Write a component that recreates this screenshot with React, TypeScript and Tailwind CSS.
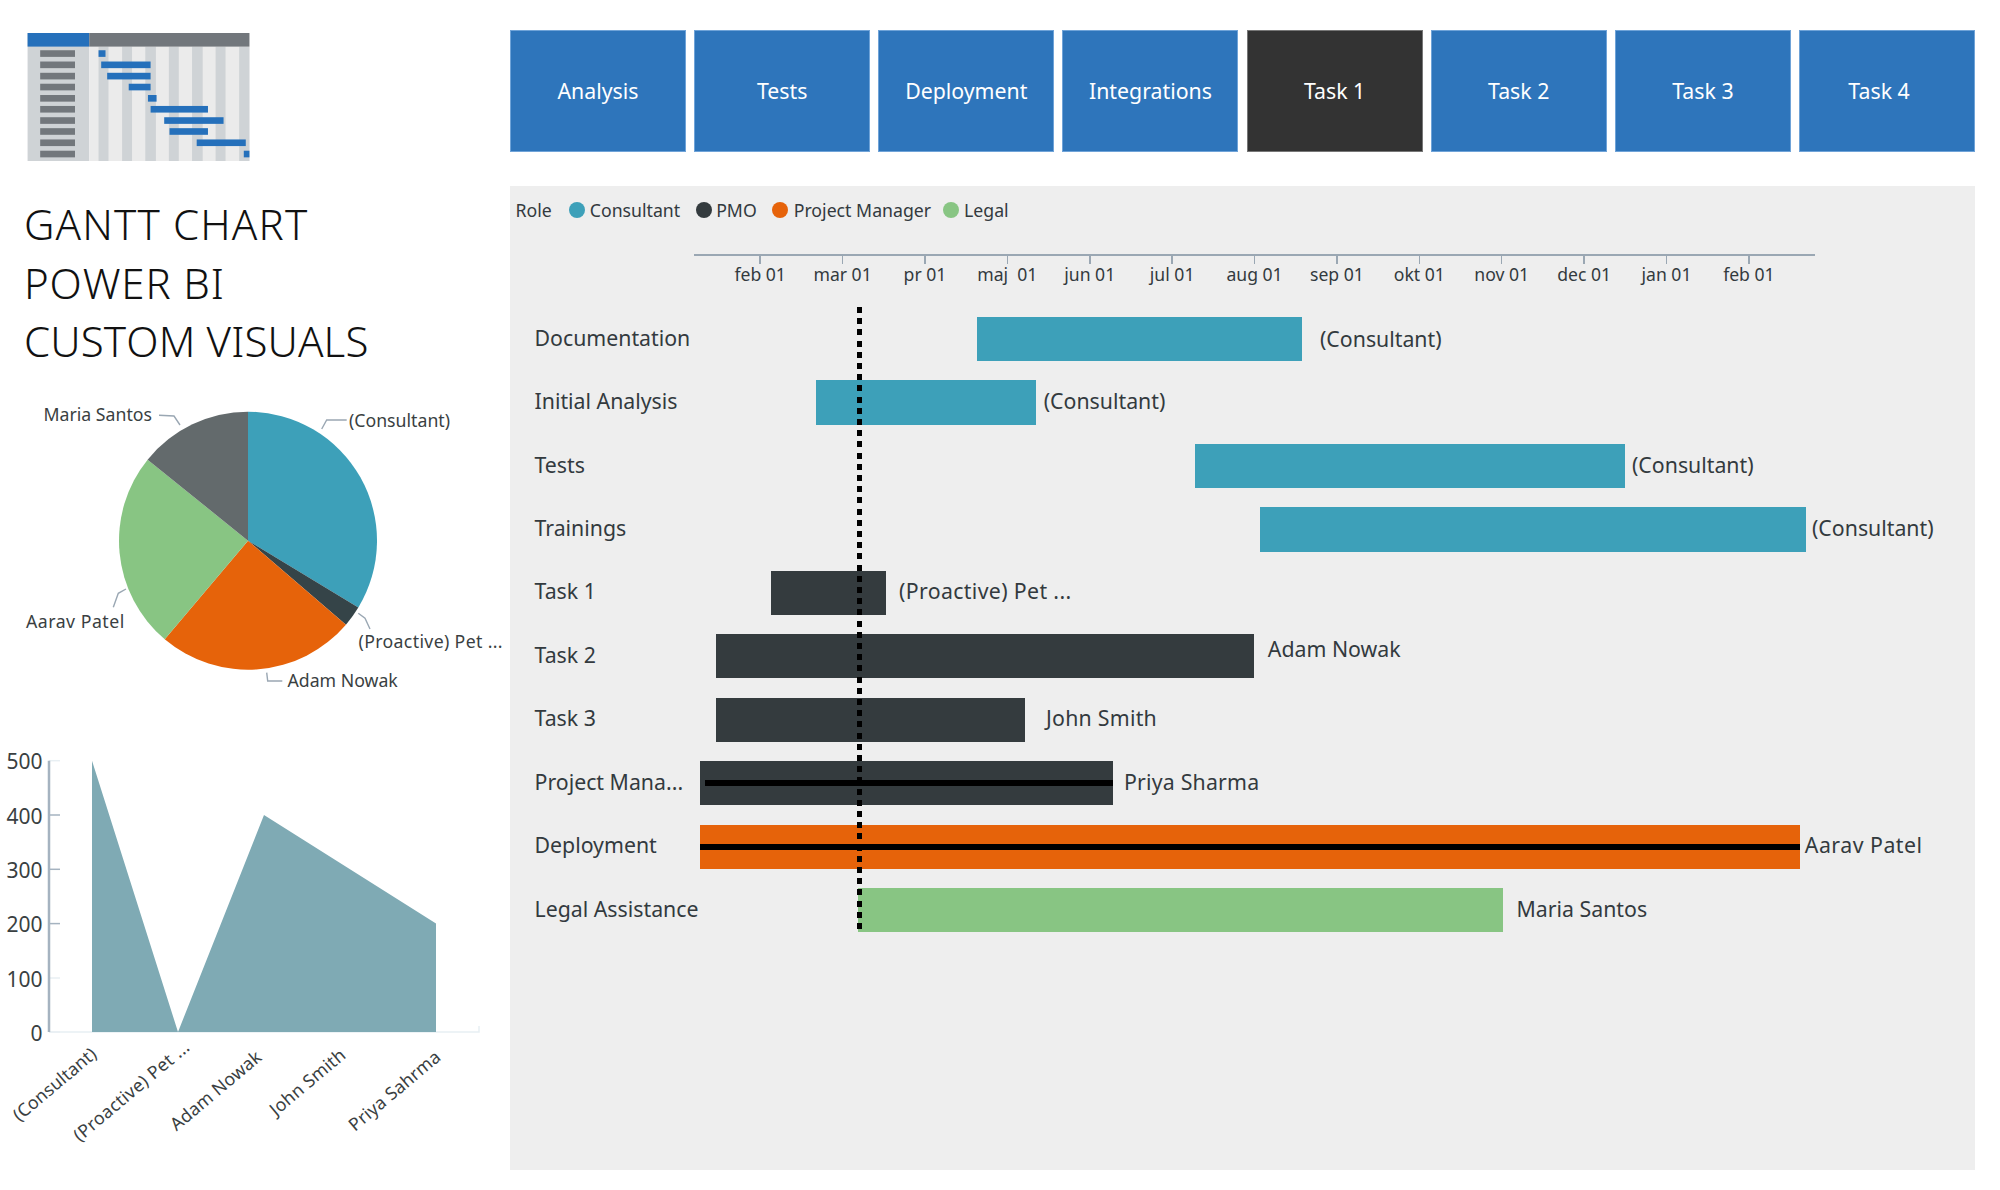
import React from "react";

const FONT = "font-['Noto_Sans',sans-serif]";

const tabs = ["Analysis", "Tests", "Deployment", "Integrations", "Task 1", "Task 2", "Task 3", "Task 4"];

const legend = [
  { name: "Consultant", dot: "bg-[#3da0b9]", box: "ml-[17px]", text: "ml-[5px]" },
  { name: "PMO", dot: "bg-[#343b3e]", box: "ml-[16px]", text: "ml-[4px]" },
  { name: "Project Manager", dot: "bg-[#e6630a]", box: "ml-[15px]", text: "ml-[6px]" },
  { name: "Legal", dot: "bg-[#88c583]", box: "ml-[12px]", text: "ml-[5px]" },
];

const months = ["feb 01", "mar 01", "pr 01", "maj\u00a0\u00a001", "jun 01", "jul 01", "aug 01", "sep 01", "okt 01", "nov 01", "dec 01", "jan 01", "feb 01"];

type Row = { name: string; bar: string; note: string; gap: string; shift: string; line?: string };

const rows: Row[] = [
  { name: "Documentation", bar: "ml-[277.7px] w-[324.8px] bg-[#3da0b9]", note: "(Consultant)", gap: "ml-[18px]", shift: "mb-0" },
  { name: "Initial Analysis", bar: "ml-[116.5px] w-[219.7px] bg-[#3da0b9]", note: "(Consultant)", gap: "ml-[8px]", shift: "mb-[4px]" },
  { name: "Tests", bar: "ml-[495.1px] w-[430.4px] bg-[#3da0b9]", note: "(Consultant)", gap: "ml-[7px]", shift: "mb-[2px]" },
  { name: "Trainings", bar: "ml-[560.2px] w-[546.3px] bg-[#3da0b9]", note: "(Consultant)", gap: "ml-[6px]", shift: "mb-[2px]" },
  { name: "Task 1", bar: "ml-[71px] w-[115.5px] bg-[#343b3e]", note: "(Proactive) Pet ...", gap: "ml-[13px] tracking-[0.35px]", shift: "mb-[3px]" },
  { name: "Task 2", bar: "ml-[16.5px] w-[537.8px] bg-[#343b3e]", note: "Adam Nowak", gap: "ml-[14px]", shift: "mb-[14px]" },
  { name: "Task 3", bar: "ml-[16.5px] w-[309px] bg-[#343b3e]", note: "John Smith", gap: "ml-[21px] tracking-[0.25px]", shift: "mb-[3px]" },
  { name: "Project Mana...", bar: "ml-0 w-[413.5px] bg-[#343b3e]", note: "Priya Sharma", gap: "ml-[11px] tracking-[0.2px]", shift: "mb-[3px]", line: "left-[5px]" },
  { name: "Deployment", bar: "ml-0 w-[1100.3px] bg-[#e6630a]", note: "Aarav Patel", gap: "ml-[5px] tracking-[0.5px]", shift: "mb-[3px]", line: "left-0" },
  { name: "Legal Assistance", bar: "ml-[158px] w-[645px] bg-[#88c583]", note: "Maria Santos", gap: "ml-[14px]", shift: "mb-[3px]" },
];

function Thumb() {
  const stripes = [295, 366, 436, 507, 577, 648, 719];
  const stripeW = [30, 30, 32, 30, 32, 30, 31];
  const ys = [160, 194, 228, 261, 295, 328, 362, 395, 429, 463];
  const bars = [[295, 316], [303, 452], [321, 452], [386, 452], [444, 470], [452, 625], [493, 672], [509, 625], [591, 739], [733, 750]];
  return (
    <svg width="223" height="128" viewBox="81 98 669 386" className="block">
      <rect x="81" y="98" width="186" height="386" fill="#cfd3d6" />
      <rect x="267" y="98" width="483" height="386" fill="#ebebeb" />
      {stripes.map((x, i) => (
        <rect key={x} x={x} y="139" width={stripeW[i]} height="345" fill="#cfd3d6" />
      ))}
      <rect x="81" y="98" width="186" height="41" fill="#2570bb" />
      <rect x="267" y="98" width="483" height="41" fill="#72777c" />
      {ys.map((y, i) => (
        <g key={y}>
          <rect x="119" y={y - 10} width="105" height="20" fill="#72777c" />
          <rect x={bars[i][0]} y={y - 10} width={bars[i][1] - bars[i][0]} height="20" fill="#2570bb" />
        </g>
      ))}
    </svg>
  );
}

const textFill = "#3a3f42";
const leader = "#9aa7b3";

function polar(deg: number) {
  const a = (deg * Math.PI) / 180;
  return [248 + 129 * Math.sin(a), 540.7 - 129 * Math.cos(a)];
}
function slice(a: number, b: number) {
  const [x1, y1] = polar(a);
  const [x2, y2] = polar(b);
  return `M248 540.7L${x1} ${y1}A129 129 0 ${b - a > 180 ? 1 : 0} 1 ${x2} ${y2}Z`;
}

function Pie() {
  return (
    <svg width="510" height="340" viewBox="0 390 510 340" className={`block mt-[19px] ${FONT}`}>
      <path d={slice(0, 121.2)} fill="#3da0b9" />
      <path d={slice(121.2, 130.6)} fill="#354448" />
      <path d={slice(130.6, 220.2)} fill="#e6630a" />
      <path d={slice(220.2, 308.9)} fill="#88c583" />
      <path d={slice(308.9, 360)} fill="#636a6c" />
      <g fill="none" stroke={leader} strokeWidth="1.4">
        <path d="M321.7 429L326.7 420L346.7 420" />
        <path d="M180 425L174 416L159 415.3" />
        <path d="M126 589L118.3 593.3L113.3 607.3" />
        <path d="M358.3 613.3L365 618.3L370 629" />
        <path d="M266.7 672.7L267.7 681L282.3 681" />
      </g>
      <g fill={textFill} className="text-[17.7px]">
        <text x="349" y="426.5">(Consultant)</text>
        <text x="43.5" y="420.5">Maria Santos</text>
        <text x="26" y="627.5" className="tracking-[0.5px]">Aarav Patel</text>
        <text x="358.5" y="648" className="tracking-[0.35px]">(Proactive) Pet ...</text>
        <text x="287.5" y="686.5">Adam Nowak</text>
      </g>
    </svg>
  );
}

function Area() {
  const ticks = [
    { y: 760.7, t: "500", c: "#e8eff3" },
    { y: 815, t: "400", c: "#a5b3c0" },
    { y: 869.3, t: "300", c: "#a5b3c0" },
    { y: 923.6, t: "200", c: "#a5b3c0" },
    { y: 978, t: "100", c: "#e8eff3" },
    { y: 1032, t: "0", c: "#e8eff3" },
  ];
  const xl = [
    { t: "(Consultant)", x: 98, y: 1056, k: "tracking-[0.1px]" },
    { t: "(Proactive) Pet ...", x: 191, y: 1049, k: "tracking-[0.35px]" },
    { t: "Adam Nowak", x: 263, y: 1059, k: "tracking-[0.2px]" },
    { t: "John Smith", x: 347, y: 1057, k: "tracking-[0.2px]" },
    { t: "Priya Sahrma", x: 442, y: 1059, k: "tracking-[0.2px]" },
  ];
  return (
    <svg width="510" height="460" viewBox="0 730 510 460" className={`block ${FONT}`}>
      <path d="M49 1032H479V1026" fill="none" stroke="#e8eff3" strokeWidth="1.5" />
      {ticks.map((k) => (
        <g key={k.t}>
          <line x1="49" x2="60" y1={k.y} y2={k.y} stroke={k.c} strokeWidth="1.5" />
          <text x="42.5" y={k.y + 8.5} textAnchor="end" fill={textFill} className="text-[21px]">
            {k.t}
          </text>
        </g>
      ))}
      <line x1="49" x2="49" y1="760.7" y2="1032" stroke="#a5b3c0" strokeWidth="2.5" />
      <path d="M92 760.7L178 1032L264 815L436 923.6V1032H92Z" fill="#7faab4" />
      {xl.map((l) => (
        <text
          key={l.t}
          x={l.x}
          y={l.y}
          textAnchor="end"
          fill={textFill}
          transform={`rotate(-40 ${l.x} ${l.y})`}
          className={`text-[17.8px] ${l.k}`}
        >
          {l.t}
        </text>
      ))}
    </svg>
  );
}

export default function App() {
  return (
    <div className={`flex w-[2000px] h-[1190px] bg-white overflow-hidden ${FONT}`}>
      <div className="w-[510px] shrink-0">
        <div className="pt-[33px] pl-[27px]">
          <Thumb />
        </div>
        <h1 className="mt-[34px] pl-[24px] text-[42px] leading-[58.7px] font-light [font-kerning:none] text-[#111]">
          <span className="tracking-[1.15px]">GANTT CHART</span>
          <br />
          <span className="tracking-[0.85px]">POWER BI</span>
          <br />
          <span className="tracking-[0.15px]">CUSTOM VISUALS</span>
        </h1>
        <Pie />
        <Area />
      </div>

      <div className="w-[1465px] shrink-0 pt-[30px]">
        <div className="grid grid-cols-8 gap-x-[8.25px] h-[122px]">
          {tabs.map((t) => (
            <div
              key={t}
              className={`flex items-center justify-center text-white text-[21.3px] border ${t === "Task 1" ? "bg-[#333333] border-[#777]" : "bg-[#2e75bb] border-[#6fa3d8]"} ${t === "Task 4" ? "pr-[16px]" : ""}`}
            >
              {t}
            </div>
          ))}
        </div>

        <div className="relative mt-[34px] h-[984px] bg-[#eeeeee] text-[#333a3e] pt-[14px]">
          <div className="flex items-center h-[20px] pl-[5.5px] text-[17.7px]">
            <span>Role</span>
            {legend.map((l) => (
              <div key={l.name} className={`flex items-center ${l.box}`}>
                <span className={`w-[16px] h-[16px] rounded-full ${l.dot}`} />
                <span className={l.text}>{l.name}</span>
              </div>
            ))}
          </div>

          <div className="ml-[184px] w-[1121px] mt-[34px] border-t-2 border-[#9aa7b3] pl-[25px]">
            <div className="flex">
              {months.map((m, i) => (
                <div key={i} className="w-[82.4px] shrink-0 flex flex-col items-center">
                  <span className="w-[1.5px] h-[8px] bg-[#9aa7b3]" />
                  <span className="h-[21px] leading-[20px] text-[17.6px] whitespace-nowrap">{m}</span>
                </div>
              ))}
            </div>
          </div>

          <div className="mt-[32px] flex flex-col gap-y-[19.25px]">
            {rows.map((r) => (
              <div key={r.name} className="flex items-center h-[44.2px]">
                <div className="w-[189.5px] pl-[24.5px] mb-[3px] shrink-0 whitespace-nowrap text-[21.3px]">{r.name}</div>
                <div className={`relative shrink-0 h-full ${r.bar}`}>
                  {r.line && <div className={`absolute right-0 top-1/2 -translate-y-1/2 h-[6px] bg-black ${r.line}`} />}
                </div>
                <div className={`shrink-0 whitespace-nowrap text-[21.3px] ${r.gap} ${r.shift}`}>{r.note}</div>
              </div>
            ))}
          </div>

          <div className="absolute left-[347px] top-[121px] w-[5px] h-[625px] bg-[repeating-linear-gradient(to_bottom,#000_0,#000_6px,transparent_6px,transparent_11.2px)]" />
        </div>
      </div>
    </div>
  );
}
